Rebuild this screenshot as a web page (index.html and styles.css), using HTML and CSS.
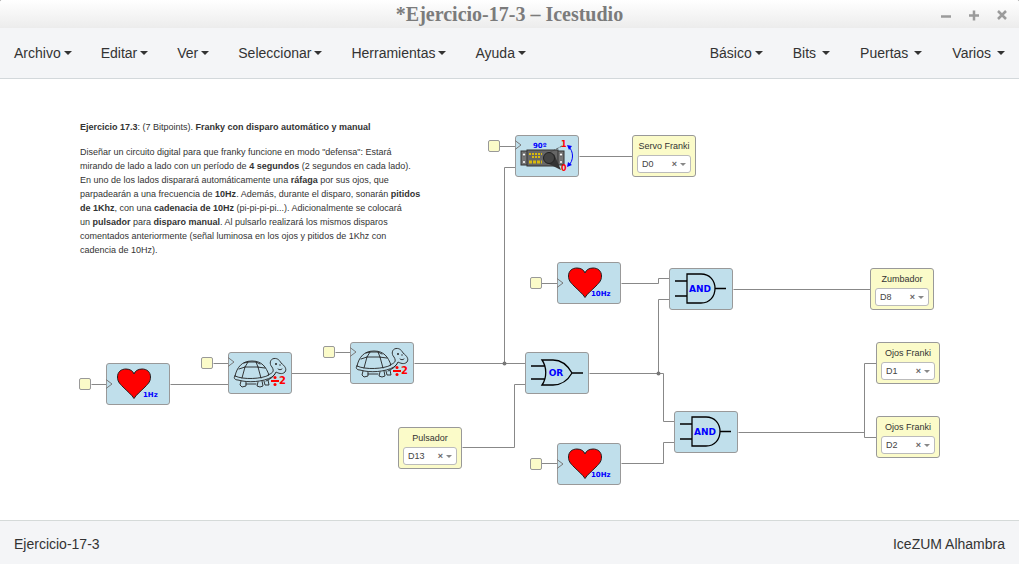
FILE: index.html
```html
<!DOCTYPE html>
<html lang="es">
<head>
<meta charset="utf-8">
<title>*Ejercicio-17-3 – Icestudio</title>
<link rel="stylesheet" href="styles.css">
</head>
<body>
<svg class="defs" aria-hidden="true">
  <symbol id="heart" viewBox="0 0 64 42">
    <path d="M28 35.500C26 32 21 28 17 24C13 20 11.500 18 11.500 14C11.500 9 15 6 20 6C24 6 27 8 28 11C29 8 32 6 36 6C41 6 44.500 9 44.500 14C44.500 18 43 20 39 24C35 28 30 32 28 35.500Z" fill="red" stroke="#222" stroke-width="1"/>
  </symbol>
  <symbol id="clock" viewBox="0 0 7 10">
    <path d="M0 .5L6 5L0 9.500" fill="none" stroke="#777"/>
  </symbol>
  <symbol id="turtle" viewBox="0 0 64 42">
    <g fill="none" stroke="#222" stroke-width=".9" stroke-linejoin="round" stroke-linecap="round">
      <path d="M7 24C9 15 14 9 24 9C34 9 38 15 41 23C34 27 15 28 7 24Z"/>
      <path d="M7 24C5 26 7 28 10 28C20 31 35 30 44 25L47 22"/>
      <path d="M11 17L17 15L29 15L37 16M17 15L20 10L28 10L30 15M17 15L14 26M30 15L33 26M20 10L16 11M28 10L32 12"/>
      <path d="M13 29L12 33L14 35L18 34L18 30M18 32L28 32M30 30L29 34L32 35L35 34L34 29M36 29L37 33L41 33L40 28"/>
      <path d="M40 23C44 21 47 20 44 15C41 12 42 7 46 6.500C50 6 52 9 53 11C57 14 59 17 57 20C54 23 50 21 48 20C46 25 42 27 38 29"/>
      <path d="M50 17C51 18 53 18 54 17"/>
    </g>
    <circle cx="48" cy="12" r="1" fill="#222"/>
    <circle cx="52" cy="13" r=".7" fill="#222"/>
    <path d="M43 29H51" stroke="red" stroke-width="2"/>
    <circle cx="47" cy="25.500" r="1.500" fill="red"/>
    <circle cx="47" cy="32.500" r="1.500" fill="red"/>
  </symbol>
  <symbol id="and-gate" viewBox="0 0 64 42">
    <path d="M18 6H32C41 6 46 13 46 20.500C46 28 41 35 32 35H18ZM6 13H18M6 28H18M46 20.500H57" fill="none" stroke="#000" stroke-width="1.300"/>
  </symbol>
  <symbol id="or-gate" viewBox="0 0 64 42">
    <path d="M17 8H28C37 8 43 14 47 21C43 28 37 33 28 33H17C22 26 22 15 17 8ZM6 14H20M6 27H20M47 21H58" fill="none" stroke="#000" stroke-width="1.300"/>
  </symbol>
</svg>

<div class="window">
  <header class="titlebar">
    <h1 class="title">*Ejercicio-17-3 – Icestudio</h1>
    <div class="window-buttons">
      <button type="button" aria-label="Minimizar"><svg viewBox="0 0 12 12"><path d="M1 7.500H11"/></svg></button>
      <button type="button" aria-label="Maximizar"><svg viewBox="0 0 12 12"><path d="M1 6.500H11M6 1.500V11.500"/></svg></button>
      <button type="button" aria-label="Cerrar"><svg viewBox="0 0 12 12"><path d="M2 2L10 10M10 2L2 10"/></svg></button>
    </div>
  </header>

  <nav class="navbar">
    <div class="menu">
      <button type="button">Archivo</button>
      <button type="button">Editar</button>
      <button type="button">Ver</button>
      <button type="button">Seleccionar</button>
      <button type="button">Herramientas</button>
      <button type="button">Ayuda</button>
    </div>
    <div class="menu menu-blocks">
      <button type="button" class="tight">Básico</button>
      <button type="button">Bits</button>
      <button type="button">Puertas</button>
      <button type="button">Varios</button>
    </div>
  </nav>

  <main class="canvas">
    <svg class="wires" aria-hidden="true">
      <path d="M91 305H106M170 305H228M213 284H228M291 294H350M335 273H350M414 284H525M504 284V88H515M499 67H515M579 77H632M541 204H557M621 204H658V199H669M669 220H658V294M589 294H663V342H674M541 384H557M621 384H663V363H674M738 353H864M876 284H864V358H876M733 210H870M462 368H514V305H525"/>
      <circle cx="504.500" cy="284.500" r="2"/>
      <circle cx="658.500" cy="294.500" r="2"/>
    </svg>

    <section class="info">
      <p><b>Ejercicio 17.3</b>: (7 Bitpoints). <b>Franky con disparo automático y manual</b></p>
      <p>Diseñar un circuito digital para que franky funcione en modo "defensa": Estará<br>
      mirando de lado a lado con un período de <b>4 segundos</b> (2 segundos en cada lado).<br>
      En uno de los lados disparará automáticamente una <b>ráfaga</b> por sus ojos, que<br>
      parpadearán a una frecuencia de <b>10Hz</b>. Además, durante el disparo, sonarán <b>pitidos<br>
      de 1Khz</b>, con una <b>cadenacia de 10Hz</b> (pi-pi-pi-pi...). Adicionalmente se colocará<br>
      un <b>pulsador</b> para <b>disparo manual</b>. Al pulsarlo realizará los mismos disparos<br>
      comentados anteriormente (señal luminosa en los ojos y pitidos de 1Khz con<br>
      cadencia de 10Hz).</p>
    </section>

    <i class="port p1"></i><i class="port p2"></i><i class="port p3"></i>
    <i class="port p4"></i><i class="port p5"></i><i class="port p6"></i>

    <div class="block heart1">
      <svg viewBox="0 0 64 42"><use href="#heart"/><use href="#clock" x="0" y="16" width="7" height="10"/><text x="37" y="34" class="hz-label">1Hz</text></svg>
    </div>
    <div class="block turtle1">
      <svg viewBox="0 0 64 42"><use href="#turtle"/><use href="#clock" x="0" y="5" width="7" height="10"/><text x="51" y="32" class="div-label">2</text></svg>
    </div>
    <div class="block turtle2">
      <svg viewBox="0 0 64 42"><use href="#turtle"/><use href="#clock" x="0" y="5" width="7" height="10"/><text x="51" y="32" class="div-label">2</text></svg>
    </div>
    <div class="block or1"><svg viewBox="0 0 64 42"><use href="#or-gate"/><text x="31" y="24" class="gate-label">OR</text></svg></div>
    <div class="block servo">
      <svg viewBox="0 0 64 42">
        <use href="#clock" x="0" y="5" width="7" height="10"/>
        <rect x="6" y="16" width="43" height="14" fill="#777" stroke="#333"/>
        <rect x="12" y="15" width="31" height="16" fill="#666" stroke="#333"/>
        <g fill="#fff" stroke="#333" stroke-width=".5"><circle cx="9" cy="19.500" r="1.500"/><circle cx="9" cy="27" r="1.500"/><circle cx="46" cy="19.500" r="1.500"/><circle cx="46" cy="27" r="1.500"/></g>
        <path d="M14 19H27M17 22H25" fill="none" stroke="#d9b90c" stroke-width="2" stroke-dasharray="2 1"/>
        <path d="M14 27H27" stroke="#d9b90c" stroke-width="3" stroke-dasharray="3 1"/>
        <path d="M34 18L47 11" stroke="#444" stroke-width=".8" stroke-dasharray="3 1"/>
        <path d="M39 19L46 35L30 27Z" fill="#333"/>
        <circle cx="34" cy="23" r="5.500" fill="#444" stroke="#222"/>
        <path d="M53 11C59 16 59 26 53 31" fill="none" stroke="blue" stroke-width="1"/>
        <path d="M52 10L57 11L54 15ZM52 32L53 27L57 30Z" fill="blue"/>
        <text x="18" y="13" class="hz-label">90º</text>
        <text x="46" y="12" class="servo-label">1</text>
        <text x="46" y="36" class="servo-label">0</text>
      </svg>
    </div>
    <div class="block heart2">
      <svg viewBox="0 0 64 42"><use href="#heart"/><use href="#clock" x="0" y="16" width="7" height="10"/><text x="34" y="34" class="hz-label">10Hz</text></svg>
    </div>
    <div class="block and1"><svg viewBox="0 0 64 42"><use href="#and-gate"/><text x="31" y="24" class="gate-label">AND</text></svg></div>
    <div class="block and2"><svg viewBox="0 0 64 42"><use href="#and-gate"/><text x="31" y="24" class="gate-label">AND</text></svg></div>
    <div class="block heart3">
      <svg viewBox="0 0 64 42"><use href="#heart"/><use href="#clock" x="0" y="16" width="7" height="10"/><text x="34" y="34" class="hz-label">10Hz</text></svg>
    </div>

    <div class="pin pin-servo">
      <label for="servo">Servo Franki</label>
      <div class="picker"><select id="servo"><option>D0</option></select><button type="button" aria-label="Borrar">×</button></div>
    </div>
    <div class="pin pin-buzzer">
      <label for="buzzer">Zumbador</label>
      <div class="picker"><select id="buzzer"><option>D8</option></select><button type="button" aria-label="Borrar">×</button></div>
    </div>
    <div class="pin pin-eye1">
      <label for="eye1">Ojos Franki</label>
      <div class="picker"><select id="eye1"><option>D1</option></select><button type="button" aria-label="Borrar">×</button></div>
    </div>
    <div class="pin pin-eye2">
      <label for="eye2">Ojos Franki</label>
      <div class="picker"><select id="eye2"><option>D2</option></select><button type="button" aria-label="Borrar">×</button></div>
    </div>
    <div class="pin pin-button">
      <label for="push">Pulsador</label>
      <div class="picker"><select id="push"><option>D13</option></select><button type="button" aria-label="Borrar">×</button></div>
    </div>
  </main>

  <footer class="footer">
    <span>Ejercicio-17-3</span>
    <span>IceZUM Alhambra</span>
  </footer>
</div>
</body>
</html>
```

FILE: styles.css
```css
* { box-sizing: border-box; }

body {
  margin: 0;
  background: #666;
  color: #333;
  font: 14px/20px "Liberation Sans", Arial, sans-serif;
}

button {
  border: 0;
  padding: 0;
  background: none;
  color: inherit;
  font: inherit;
}

.defs { position: absolute; width: 0; height: 0; }

.window {
  display: flex;
  flex-direction: column;
  min-height: 100vh;
  border-radius: 2px 2px 0 0;
  background: #fff;
  overflow: hidden;
}

.titlebar {
  display: grid;
  grid-template-columns: 1fr auto 1fr;
  align-items: center;
  height: 28px;
  padding: 0 11px;
  background: linear-gradient(#fff, #ececec);
}

.title {
  grid-column: 2;
  margin: 0;
  color: #7b7b7b;
  font: bold 20px/28px "Liberation Serif", serif;
}

.window-buttons {
  display: flex;
  justify-content: flex-end;
  gap: 16px;
  padding-top: 2px;
}

.window-buttons button { width: 12px; height: 12px; }

.window-buttons svg {
  display: block;
  fill: none;
  stroke: #9b9b9b;
  stroke-width: 2.5;
}

.navbar {
  display: flex;
  justify-content: space-between;
  align-items: center;
  height: 51px;
  padding: 0 14px;
  border-bottom: 1px solid #d3d8db;
  background: #f4f5f7;
}

.menu { display: flex; gap: 29px; }

.menu button {
  display: flex;
  align-items: center;
  gap: 3px;
}

.menu button::after {
  content: "";
  border: 4px solid transparent;
  border-top-color: #333;
  border-bottom: 0;
}

.menu-blocks { gap: 30px; }
.menu-blocks button { gap: 6px; }
.menu-blocks .tight { gap: 3px; }

.canvas {
  position: relative;
  flex: 1;
}

.wires {
  position: absolute;
  width: 100%;
  height: 100%;
  fill: #777;
}

.wires path {
  fill: none;
  stroke: #888;
  stroke-width: 1;
  transform: translate(0.5px, 0.5px);
}

.info {
  position: absolute;
  left: 80px;
  top: 41px;
  font-size: 9px;
  line-height: 14px;
  white-space: nowrap;
}

.info p { margin: 0 0 11px; }

.block,
.pin {
  position: absolute;
  width: 64px;
  height: 42px;
  border: 1px solid #999;
  border-radius: 3px;
}

.block { background: #c0dfeb; }

.block svg {
  display: block;
  width: 64px;
  height: 42px;
  margin: -1px;
}

.port {
  position: absolute;
  width: 12px;
  height: 12px;
  border: 1px solid #999;
  border-radius: 2px;
  background: #fbfbc9;
}

.p1 { left: 79px; top: 299px; }
.p2 { left: 201px; top: 278px; }
.p3 { left: 323px; top: 267px; }
.p4 { left: 488px; top: 61px; }
.p5 { left: 530px; top: 198px; }
.p6 { left: 530px; top: 379px; }

.heart1 { left: 106px; top: 284px; }
.turtle1 { left: 228px; top: 273px; }
.turtle2 { left: 350px; top: 263px; }
.or1 { left: 525px; top: 273px; }
.servo { left: 515px; top: 56px; }
.heart2 { left: 557px; top: 183px; }
.and1 { left: 669px; top: 189px; }
.and2 { left: 674px; top: 332px; }
.heart3 { left: 557px; top: 364px; }

.hz-label,
.gate-label,
.div-label,
.servo-label {
  fill: blue;
  font: bold 7px "DejaVu Sans", sans-serif;
}

.gate-label { font-size: 9px; text-anchor: middle; }
.div-label { fill: red; font-size: 10px; }
.servo-label { fill: red; font-size: 8px; }

.pin {
  display: flex;
  flex-direction: column;
  padding: 3px 4px;
  background: #fbfbc9;
  font-size: 9px;
  line-height: 14px;
}

.pin label { text-align: center; white-space: nowrap; }

.pin-servo { left: 632px; top: 56px; }
.pin-buzzer { left: 870px; top: 189px; }
.pin-eye1 { left: 876px; top: 263px; }
.pin-eye2 { left: 876px; top: 337px; }
.pin-button { left: 398px; top: 348px; }

.picker {
  position: relative;
  margin-top: 2px;
}

.picker select {
  display: block;
  width: 100%;
  height: 18px;
  padding: 0 4px;
  border: 1px solid #bbb;
  border-radius: 3px;
  background: #fff;
  color: #444;
  font: inherit;
  appearance: none;
}

.picker::after {
  content: "";
  position: absolute;
  right: 5px;
  top: 8px;
  border: 3px solid transparent;
  border-top-color: #888;
  border-bottom: 0;
}

.picker button {
  position: absolute;
  right: 14px;
  top: 2px;
  color: #666;
  font-weight: bold;
}

.footer {
  display: flex;
  justify-content: space-between;
  align-items: center;
  height: 44px;
  padding: 2px 14px 0;
  border-top: 1px solid #d5dad9;
  background: #f4f5f7;
}
```
